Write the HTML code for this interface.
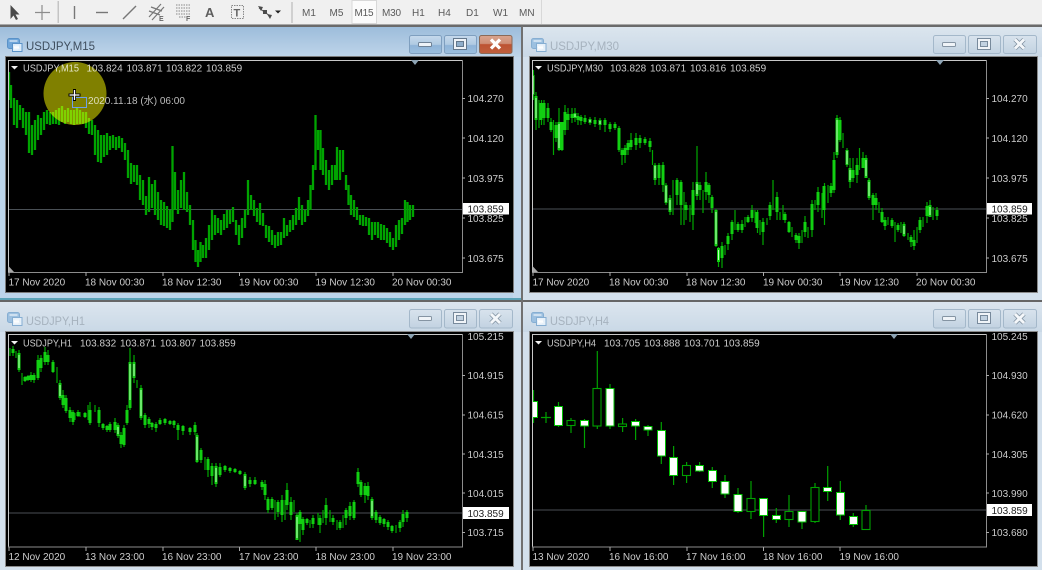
<!DOCTYPE html>
<html><head><meta charset="utf-8">
<style>
html,body{margin:0;padding:0;width:1042px;height:570px;overflow:hidden;background:#e8eef4}
svg{display:block;filter:blur(.3px)}
text{font-family:"Liberation Sans","Noto Sans CJK JP",sans-serif;font-size:10px;fill:#cccccc}
.t{fill:#5a5a5a;font-size:10px}
.ti{font-size:12px;fill:#a6b2be}
.w{stroke:#00a800;stroke-width:1.2;fill:none}
.b{stroke:#12d012;stroke-width:3;fill:none}
.c{stroke:#c0ffc0;stroke-width:1;fill:none}
</style></head><body>
<svg width="1042" height="570" viewBox="0 0 1042 570" xmlns="http://www.w3.org/2000/svg">
<defs>
<linearGradient id="ga" x1="0" y1="0" x2="0" y2="1"><stop offset="0" stop-color="#9dbddb"/><stop offset="1" stop-color="#bfd5ea"/></linearGradient>
<linearGradient id="gi" x1="0" y1="0" x2="0" y2="1"><stop offset="0" stop-color="#dbe5ee"/><stop offset="1" stop-color="#c9d8e6"/></linearGradient>
<linearGradient id="ba" x1="0" y1="0" x2="0" y2="1"><stop offset="0" stop-color="#c6d9ec"/><stop offset=".5" stop-color="#b0cae2"/><stop offset=".55" stop-color="#8fb4d8"/><stop offset="1" stop-color="#9cbfdf"/></linearGradient>
<linearGradient id="bi" x1="0" y1="0" x2="0" y2="1"><stop offset="0" stop-color="#d8e3ed"/><stop offset="1" stop-color="#c2d2e1"/></linearGradient>
<linearGradient id="br" x1="0" y1="0" x2="0" y2="1"><stop offset="0" stop-color="#d9a48e"/><stop offset=".45" stop-color="#cf8f76"/><stop offset=".5" stop-color="#bd5332"/><stop offset="1" stop-color="#c0603e"/></linearGradient>
<clipPath id="c1"><rect x="9" y="61" width="453" height="211"/></clipPath>
<clipPath id="c2"><rect x="533" y="61" width="453" height="211"/></clipPath>
<clipPath id="c3"><rect x="9" y="335" width="453" height="212"/></clipPath>
<clipPath id="c4"><rect x="533" y="335" width="453" height="212"/></clipPath>
</defs>

<!-- toolbar -->
<rect x="0" y="0" width="1042" height="25" fill="#f0f0f0"/>
<rect x="0" y="24" width="1042" height="1" fill="#a8a8a8"/>
<rect x="0" y="25" width="1042" height="2" fill="#6a6a6a"/>
<path d="M10.5 5V19L13.5 15.5 16 20 18 19 15.5 14.5H19.5Z" fill="#4a4a4a"/>
<path d="M42 5V20M35 12.5H50" stroke="#8c8c8c" stroke-width="1.2" fill="none"/>
<rect x="57.5" y="1" width="1.5" height="22" fill="#c4c4c4"/>
<path d="M74.5 6V19" stroke="#777" stroke-width="1.4"/>
<path d="M96 12.5H108" stroke="#777" stroke-width="1.4"/>
<path d="M123 19L136 6" stroke="#777" stroke-width="1.4"/>
<path d="M149 17L161 4M152 20L164 7M149 11L160 15M151 7L162 11" stroke="#777" stroke-width="1.2" fill="none"/>
<text x="159" y="21" style="font-size:7px;font-weight:bold;fill:#666">E</text>
<path d="M176 5H191M176 8H191M176 11H191M176 14H191M179 17H187" stroke="#888" stroke-dasharray="1.5 1" fill="none"/>
<text x="186" y="21" style="font-size:7px;font-weight:bold;fill:#666">F</text>
<text x="205" y="17" style="font-size:13px;font-weight:bold;fill:#5e5e5e">A</text>
<rect x="231.5" y="5.5" width="12" height="13" fill="none" stroke="#888" stroke-dasharray="1.5 1"/>
<text x="233.5" y="16.5" style="font-size:11px;font-weight:bold;fill:#666">T</text>
<path d="M259 8L270 16" stroke="#555"/><path d="M258 6L263 7 261 11ZM263 10h4v4h-4zM267 14l5 1-2 4z" fill="#4c4c4c"/>
<path d="M275 10.5h6l-3 3z" fill="#222"/>
<rect x="291" y="2" width="2" height="21" fill="#d0d0d0"/>
<rect x="352" y="0.5" width="24.5" height="23" fill="#fbfbfb" stroke="#d8d8d8"/>
<text class="t" x="302" y="16">M1</text>
<text class="t" x="329.5" y="16">M5</text>
<text class="t" x="354.5" y="16" textLength="19">M15</text>
<text class="t" x="382" y="16" textLength="19">M30</text>
<text class="t" x="412" y="16">H1</text>
<text class="t" x="438" y="16">H4</text>
<text class="t" x="466" y="16">D1</text>
<text class="t" x="493" y="16">W1</text>
<text class="t" x="519" y="16">MN</text>
<rect x="541" y="0" width="1" height="24" fill="#d8d8d8"/>

<!-- window frames -->
<rect x="0" y="27" width="521" height="272" fill="#bcd4ea"/>
<rect x="0" y="27" width="521" height="30" fill="url(#ga)"/>
<rect x="513" y="57" width="8" height="241" fill="#c3d8ec"/>
<rect x="0" y="298" width="521" height="2" fill="#5ba3b8"/>
<rect x="521" y="26" width="2" height="274" fill="#707070"/>
<rect x="523" y="27" width="519" height="273" fill="#d3e0ec"/>
<rect x="523" y="27" width="519" height="30" fill="url(#gi)"/>
<rect x="0" y="300" width="1042" height="2" fill="#666"/>
<rect x="0" y="302" width="521" height="268" fill="#d3e0ec"/>
<rect x="0" y="302" width="521" height="30" fill="url(#gi)"/>
<rect x="521" y="300" width="2" height="270" fill="#707070"/>
<rect x="523" y="302" width="519" height="268" fill="#d3e0ec"/>
<rect x="523" y="302" width="519" height="30" fill="url(#gi)"/>

<!-- black chart areas -->
<rect x="5.5" y="56.5" width="508" height="236" fill="#000" stroke="#7b7b7b"/>
<rect x="529.5" y="56.5" width="508" height="236" fill="#000" stroke="#8a8a8a"/>
<rect x="5.5" y="331.5" width="508" height="235" fill="#000" stroke="#8a8a8a"/>
<rect x="529.5" y="331.5" width="508" height="235" fill="#000" stroke="#8a8a8a"/>

<!-- title icons -->
<g><rect x="7.5" y="38.5" width="12" height="10" rx="2" fill="#6fa6da" stroke="#5a92c8"/><rect x="12.5" y="43.5" width="9.5" height="8" fill="#dcecfa" stroke="#5a92c8"/><path d="M9.5 41h8M14 46l1 3 1-3 1 3 1-3 1 3" stroke="#fff" fill="none" stroke-width=".9"/></g>
<g><rect x="531.5" y="38.5" width="12" height="10" rx="2" fill="#9cc0e0" stroke="#86aed2"/><rect x="536.5" y="43.5" width="9.5" height="8" fill="#e6f0f9" stroke="#86aed2"/><path d="M533.5 41h8M538 46l1 3 1-3 1 3 1-3 1 3" stroke="#fff" fill="none" stroke-width=".9"/></g>
<g><rect x="7.5" y="312.5" width="12" height="10" rx="2" fill="#9cc0e0" stroke="#86aed2"/><rect x="12.5" y="317.5" width="9.5" height="8" fill="#e6f0f9" stroke="#86aed2"/><path d="M9.5 315h8M14 320l1 3 1-3 1 3 1-3 1 3" stroke="#fff" fill="none" stroke-width=".9"/></g>
<g><rect x="531.5" y="312.5" width="12" height="10" rx="2" fill="#9cc0e0" stroke="#86aed2"/><rect x="536.5" y="317.5" width="9.5" height="8" fill="#e6f0f9" stroke="#86aed2"/><path d="M533.5 315h8M538 320l1 3 1-3 1 3 1-3 1 3" stroke="#fff" fill="none" stroke-width=".9"/></g>

<text class="ti" x="26" y="50" textLength="69" lengthAdjust="spacingAndGlyphs" style="fill:#3f4e5e">USDJPY,M15</text>
<text class="ti" x="550" y="50" textLength="69" lengthAdjust="spacingAndGlyphs">USDJPY,M30</text>
<text class="ti" x="26" y="325" textLength="59" lengthAdjust="spacingAndGlyphs">USDJPY,H1</text>
<text class="ti" x="550" y="325" textLength="59" lengthAdjust="spacingAndGlyphs">USDJPY,H4</text>

<!-- window buttons W1 -->
<rect x="409.5" y="35.5" width="32" height="18" rx="2" fill="url(#ba)" stroke="#7f9fbf"/>
<rect x="418.5" y="42.5" width="13" height="4" rx="1" fill="#eef3f8" stroke="#6f8296"/>
<rect x="444.5" y="35.5" width="32" height="18" rx="2" fill="url(#ba)" stroke="#7f9fbf"/>
<rect x="453.5" y="38.5" width="13" height="11" fill="#eef3f8" stroke="#64788c"/><rect x="456.5" y="41.5" width="7" height="5" fill="#8faecb" stroke="#64788c"/>
<rect x="479.5" y="35.5" width="32.5" height="18" rx="2" fill="url(#br)" stroke="#8a6a58"/>
<path d="M491 39.5l9 9M500 39.5l-9 9" stroke="#fff" stroke-width="3.2"/>
<!-- W2 -->
<rect x="933.5" y="35.5" width="32" height="18" rx="2" fill="url(#bi)" stroke="#a4b8ca"/>
<rect x="942.5" y="42.5" width="13" height="4" rx="1" fill="#f0f4f8" stroke="#8594a3"/>
<rect x="968.5" y="35.5" width="32" height="18" rx="2" fill="url(#bi)" stroke="#a4b8ca"/>
<rect x="977.5" y="38.5" width="13" height="11" fill="#f0f4f8" stroke="#788a9c"/><rect x="980.5" y="41.5" width="7" height="5" fill="#c2d2e1" stroke="#788a9c"/>
<rect x="1003.5" y="35.5" width="33" height="18" rx="2" fill="url(#bi)" stroke="#a4b8ca"/>
<path d="M1015 39.5l9 9M1024 39.5l-9 9" stroke="#7c8c9c" stroke-width="4.4"/><path d="M1015 39.5l9 9M1024 39.5l-9 9" stroke="#f4f7fa" stroke-width="3"/>
<!-- W3 -->
<rect x="409.5" y="309.5" width="32" height="18.5" rx="2" fill="url(#bi)" stroke="#a4b8ca"/>
<rect x="418.5" y="316.5" width="13" height="4" rx="1" fill="#f0f4f8" stroke="#8594a3"/>
<rect x="444.5" y="309.5" width="32" height="18.5" rx="2" fill="url(#bi)" stroke="#a4b8ca"/>
<rect x="453.5" y="312.5" width="13" height="11" fill="#f0f4f8" stroke="#788a9c"/><rect x="456.5" y="315.5" width="7" height="5" fill="#c2d2e1" stroke="#788a9c"/>
<rect x="479.5" y="309.5" width="33" height="18.5" rx="2" fill="url(#bi)" stroke="#a4b8ca"/>
<path d="M491 314l9 9M500 314l-9 9" stroke="#7c8c9c" stroke-width="4.4"/><path d="M491 314l9 9M500 314l-9 9" stroke="#f4f7fa" stroke-width="3"/>
<!-- W4 -->
<rect x="933.5" y="309.5" width="32" height="18.5" rx="2" fill="url(#bi)" stroke="#a4b8ca"/>
<rect x="942.5" y="316.5" width="13" height="4" rx="1" fill="#f0f4f8" stroke="#8594a3"/>
<rect x="968.5" y="309.5" width="32" height="18.5" rx="2" fill="url(#bi)" stroke="#a4b8ca"/>
<rect x="977.5" y="312.5" width="13" height="11" fill="#f0f4f8" stroke="#788a9c"/><rect x="980.5" y="315.5" width="7" height="5" fill="#c2d2e1" stroke="#788a9c"/>
<rect x="1003.5" y="309.5" width="33" height="18.5" rx="2" fill="url(#bi)" stroke="#a4b8ca"/>
<path d="M1015 314l9 9M1024 314l-9 9" stroke="#7c8c9c" stroke-width="4.4"/><path d="M1015 314l9 9M1024 314l-9 9" stroke="#f4f7fa" stroke-width="3"/>

<!-- price lines -->
<path d="M9 209.5H462M533 209H986" stroke="#4a5056" stroke-width="1"/>
<path d="M9 513H462M533 510H986" stroke="#4a4e54" stroke-width="1"/>

<!-- W1 bars -->
<path clip-path="url(#c1)" fill="none" stroke="#00a400" stroke-width="2.3" d="M9 72V100M11 85V108M14 98V125M17 100V128M20 105V120M23 108V128M26 112V135M29 112V153M32 125V155M35 120V150M38 115V140M41 118V135M44 112V130M47 110V124M50 112V125M53 112V124M56 110V124M59 108V125M62 106V122M65 110V124M68 108V122M71 110V124M74 110V125M77 108V124M80 110V124M83 112V124M86 112V128M89 118V134M92 120V135M95 125V155M98 130V162M101 135V163M104 135V157M107 133V155M110 136V150M113 135V148M116 137V150M119 136V148M122 138V152M125 143V160M128 150V178M131 163V184M134 165V182M137 165V185M140 175V200M143 180V205M146 196V215M149 177V212M152 184V208M155 180V215M158 192V220M161 200V225M164 202V226M167 206V228M170 210V230M172.5 146V222M175 172V210M178 190V214M181 180V208M184 172V210M187 192V212M190 205V225M193 220V250M195.5 240V262M198 250V267M200.5 242V262M203 245V258M206 238V258M209 225V250M212 210V240M215 215V235M218 218V233M221 220V235M224 214V230M227 210V228M230 210V224M233 207V222M236 220V235M239 225V245M242 218V238M245 210V228M248 180V215M251 195V210M254 200V216M257 208V222M260 203V225M263 213V226M266 225V238M269 226V242M272 230V245M275 235V248M278 232V246M281 232V245M284 218V238M287 225V236M290 220V232M293 215V230M296 208V225M299 197V220M302 205V225M305 210V222M308 200V216M310.5 185V210M313 165V190M315.5 115V170M318 130V150M320.5 130V170M323 148V175M326 160V185M329 170V190M332 165V185M335 165V180M337 147V180M340 150V180M343 150V172M346 175V190M348.5 185V205M351 195V215M354 200V217M357 207V220M360 215V225M363 215V226M366 217V226M369 218V235M372 222V240M375 222V235M378 222V238M381 224V240M384 225V240M387 228V243M390 232V247M393 238V250M396 225V247M399 220V240M402 218V234M405 200V225M407.5 202V222M410 205V220M413 205V217"/>

<!-- W2 candles -->
<g clip-path="url(#c2)">
<path class="w" d="M533.5 70V100M536 92V130M539 100V128M541.5 100V125M544 100V125M548 103V122M551 118V132M553.5 120V155M556 122V142M559 108V151M562 122V151M565 105V135M568 108V130M572 108V123M575 108V122M578 113V125M581 115V125M585 115V124M590 117V125M595 117V127M600 118V130M605 118V132M610 122V132M615 122V130M619 126V152M622 148V165M625 145V163M628 140V155M631 133V150M636 133V150M640 135V148M645 137V145M650 138V152M652.5 150V165M655 163V185M659 163V185M663 162V192M666 183V205M670 195V215M673 180V215M677 178V205M681 180V225M684 192V225M686 202V220M690 205V222M693 182V230M697 146V200M700 182V200M703 190V213M706 172V200M709 183V203M712 195V213M716 209V247M718.5 247V267M722 242V268M725 245V255M728 233V250M732 220V240M735 210V230M738 222V232M742 220V233M745 217V227M748 215V223M752 205V222M755 210V223M757.5 210V233M760 220V235M763 218V245M767 218V225M770 202V220M773 180V210M777 192V220M780 212V220M783 205V220M785 212V223M789 221V233M792 227V237M796 233V243M799 233V249M802 230V243M805 216V237M808 227V238M812 200V237M815 200V210M818 187V212M822 193V218M824.5 183V225M828 185V203M831 183V197M834 152V193M837 115V158M840 117V142M843 133V148M847 148V167M850 158V188M853 158V182M857 158V183M859.5 148V170M863 152V168M866 155V178M869 178V200M873 193V220M876 193V210M879 202V213M882 208V223M885 217V230M888 217V225M892 218V228M895 222V242M898 223V232M901 222V233M904 222V237M908 233V240M911 235V247M914 230V250M917 227V243M920 217V233M923 217V227M927 202V223M930 200V217M933 207V220M937 207V220"/>
<path class="b" d="M533 75V95M536 96V120M541 103V120M544 103V118M548 108V118M551 122V130M556 125V138M559 122V150M562 122V150M565 112V130M568 114V120M572 114V118M575 113V118M578 116V120M581 117V121M585 118V122M590 119V123M595 120V124M600 120V125M605 120V125M610 124V129M615 124V128M619 128V150M622 150V155M625 148V155M628 143V150M631 140V147M636 138V145M640 138V143M645 139V143M650 141V147M655 165V180M659 165V178M663 165V185M666 185V203M670 198V212M677 180V195M681 182V205M686 205V210M693 190V215M697 182V196M700 185V190M706 182V192M709 185V195M712 197V208M716 210V246M718.5 248V262M722 246V258M728 236V244M732 222V234M738 224V230M742 224V230M748 217V222M752 210V218M757 212V228M763 222V232M770 205V216M777 197V212M785 214V220M789 222V232M796 235V240M799 236V243M805 222V232M812 204V230M818 192V205M824 186V210M831 186V193M834 160V190M837 118V155M840 120V140M847 150V165M850 168V182M853 170V178M857 165V175M863 158V168M866 158V178M869 180V198M873 195V205M876 198V205M882 212V222M885 220V226M892 220V226M898 225V230M904 224V236M911 237V242M914 240V246M920 220V230M927 206V216M930 205V217M937 210V216"/>
<path class="c" d="M533 76V94M536 98V118M559 124V148M655 166V178M666 186V202M670 200V210M697 184V194M716 212V244M718.5 250V260M837 120V152M847 151V164M850 170V180M866 160V176M869 182V196M930 207V215M904 226V234M575 114V117M590 120V122M600 121V124"/>
</g>

<!-- W3 candles -->
<g clip-path="url(#c3)">
<path class="w" d="M10 348V356M13 346V356M16 351V358M19 350V372M22 373V385M25 376V382M28 375V381M31 372V382M34 373V383M38 355V380M41 355V372M45 347V365M48 350V365M53 360V373M57 367V383M60 380V400M63 390V408M66 395V413M70 407V422M73 410V425M75 413V420M78 410V417M80 412V417M85 412V418M88 405V420M90 402V425M95 405V412M99 407V427M103 423V430M107 425V432M110 422V432M115 418V433M118 423V438M121 432V448M124 425V447M127 405V425M130 348V410M134 355V383M137 380V388M141 385V420M145 413V428M149 417V428M152 422V430M156 422V432M160 418V425M165 418V425M170 420V425M174 420V428M178 423V440M183 425V435M190 427V435M195 422V435M197 433V463M201 448V463M205 457V470M208 457V477M212 463V485M216 463V487M220 463V477M225 465V472M230 467V473M235 468V473M240 470V475M245 472V490M250 477V487M255 477V485M262 480V490M265 480V500M268 497V513M272 497V510M275 500V520M278 500V517M282 495V522M285 500V520M287 483V510M291 497V520M294 500V512M297 513V540M300 510V542M303 517V535M307 518V525M310 520V528M313 515V528M318 513V525M320 515V533M323 510V523M326 498V525M330 510V522M333 515V525M337 520V530M340 520V530M343 515V528M346 508V525M350 502V520M354 500V520M358 468V487M361 480V497M365 483V503M368 482V500M372 497V520M376 510V523M380 515V525M384 518V527M388 520V530M392 525V533M396 525V533M400 520V532M403 510V527M407 510V522"/>
<path class="b" d="M13 349V353M19 353V370M25 377V381M28 376V380M31 375V380M34 375V380M38 360V378M41 358V368M45 352V362M48 355V362M53 362V372M60 383V398M63 395V405M66 398V411M70 410V418M73 412V422M78 412V416M85 413V417M90 410V423M99 410V423M103 424V428M107 426V430M110 424V430M115 422V430M118 425V436M121 435V444M124 428V445M127 410V423M130 362V408M134 362V378M141 388V418M145 415V425M149 419V424M152 423V427M156 424V428M160 420V424M165 419V423M170 421V424M174 421V425M178 425V430M183 426V431M190 428V432M195 425V432M197 435V462M201 450V460M208 459V470M212 466V476M216 466V484M220 467V475M225 466V470M230 468V471M235 469V472M240 471V474M245 474V488M250 480V484M255 480V484M262 482V487M265 484V495M268 499V510M272 499V508M278 502V512M282 500V515M287 490V505M291 502V515M297 515V540M300 512V524M303 519V530M307 519V523M313 518V524M320 518V525M326 505V518M333 518V522M340 522V528M346 510V518M350 506V516M354 502V518M358 472V484M361 482V495M365 486V495M368 486V496M372 499V518M376 512V520M380 517V523M384 519V524M388 522V527M392 526V531M400 522V528M403 514V522M407 512V518"/>
<path class="c" d="M19 355V368M60 385V396M118 427V434M130 364V400M134 364V376M141 390V416M197 437V460M216 468V482M245 476V486M297 517V538M372 501V516"/>
</g>

<!-- W4 candles -->
<g clip-path="url(#c4)">
<path stroke="#00a000" stroke-width="1.2" fill="none" d="M533.5 390V423M546 412V423M541 417.5H551M558.5 402V427M571 418V433M584.5 419V448M597.3 351V429M610 384V429M622.6 418V432M635.6 419V440M648 425V436M661.3 422V464M673.6 446V485M686.6 462V483M699.6 462V472M712.3 467V488M725 475V498M738 488V513M751 481V519M763.6 498V537M776.3 508V523M789 495V527M802 511V529M815 483V523M827.7 466V501M840.3 481V520M853.3 513V527M866 505V529"/>
<g fill="#fff" stroke="#00c000" stroke-width="1">
<rect x="529" y="401.5" width="8.5" height="16"/>
<rect x="554.5" y="406.5" width="8" height="19"/>
<rect x="580.5" y="420.5" width="8" height="5.5"/>
<rect x="606" y="388.5" width="8" height="37.5"/>
<rect x="631.5" y="421.5" width="8" height="4.5"/>
<rect x="644" y="426.5" width="8" height="3.5"/>
<rect x="657.5" y="430.5" width="8" height="25.5"/>
<rect x="669.5" y="457.5" width="8" height="18"/>
<rect x="695.5" y="465.5" width="8" height="5.5"/>
<rect x="708.5" y="470.5" width="8" height="11"/>
<rect x="721" y="481.5" width="8" height="12.5"/>
<rect x="734" y="494.5" width="8" height="17"/>
<rect x="759.5" y="498.5" width="8" height="17"/>
<rect x="772.5" y="515.5" width="8" height="4"/>
<rect x="798" y="511.5" width="8" height="10.5"/>
<rect x="823.5" y="487.5" width="8" height="4"/>
<rect x="836.5" y="492.5" width="8" height="22.5"/>
<rect x="849.5" y="516.5" width="8" height="8"/>
</g>
<g fill="#000" stroke="#00a000" stroke-width="1.1">
<rect x="567" y="420.5" width="8" height="5"/>
<rect x="593" y="388.5" width="8" height="37.5"/>
<rect x="618.5" y="424" width="8" height="2.5"/>
<rect x="682.5" y="465.5" width="8" height="10"/>
<rect x="747" y="498.5" width="8" height="13"/>
<rect x="785" y="511.5" width="8" height="8"/>
<rect x="811" y="487.5" width="8" height="34"/>
<rect x="862" y="510.5" width="8" height="19"/>
</g>
</g>

<!-- frames -->
<g fill="none" stroke-width="1">
<path d="M8.5 273V60.5H462.5" stroke="#c8c8c8"/><path d="M462.5 60V272.5H8" stroke="#8c8c8c"/>
<path d="M532.5 273V60.5H986.5" stroke="#c8c8c8"/><path d="M986.5 60V272.5H532" stroke="#8c8c8c"/>
<path d="M8.5 547V334.5H462.5" stroke="#c8c8c8"/><path d="M462.5 334V547H8" stroke="#8c8c8c"/>
<path d="M532.5 547V334.5H986.5" stroke="#c8c8c8"/><path d="M986.5 334V547H532" stroke="#8c8c8c"/>
</g>
<path d="M8.5 272V266L14 272ZM532.5 272V266L538 272Z" fill="#a8a8a8"/>
<path d="M411 60h8l-4 5zM936 60h8l-4 5zM407 334h8l-4 5zM890 334h8l-4 5z" fill="#8ea4b4"/>
<path d="M9 272v4M86 272v4M163 272v4M239.5 272v4M316 272v4M393 272v4M533 272v4M610 272v4M687 272v4M763.5 272v4M840 272v4M917 272v4M9 547v4M86 547v4M163 547v4M239.5 547v4M316 547v4M393 547v4M533 547v4M610 547v4M687 547v4M763.5 547v4M840 547v4" stroke="#aaa" fill="none"/>
<path d="M462 98.5h3M462 138h3M462 178h3M462 218h3M462 258h3M986 98.5h3M986 138h3M986 178h3M986 218h3M986 258h3M462 375.5h3M462 415h3M462 454h3M462 493h3M462 532.5h3M986 375.5h3M986 415h3M986 454h3M986 493h3M986 532.5h3" stroke="#aaa" fill="none"/>

<!-- header triangles -->
<path d="M11 66h7l-3.5 3.5zM535 66h7l-3.5 3.5zM11 341h7l-3.5 3.5zM535 341h7l-3.5 3.5z" fill="#f0f0f0"/>

<!-- header texts -->
<text x="23" y="71.5" textLength="56" lengthAdjust="spacingAndGlyphs">USDJPY,M15</text>
<text x="86.5" y="71.5">103.824</text><text x="126.5" y="71.5">103.871</text><text x="166" y="71.5">103.822</text><text x="206" y="71.5">103.859</text>
<text x="547" y="71.5" textLength="56" lengthAdjust="spacingAndGlyphs">USDJPY,M30</text>
<text x="610" y="71.5">103.828</text><text x="650" y="71.5">103.871</text><text x="690" y="71.5">103.816</text><text x="730" y="71.5">103.859</text>
<text x="23" y="346.5" textLength="49" lengthAdjust="spacingAndGlyphs">USDJPY,H1</text>
<text x="80" y="346.5">103.832</text><text x="120" y="346.5">103.871</text><text x="160" y="346.5">103.807</text><text x="199.5" y="346.5">103.859</text>
<text x="547" y="346.5" textLength="49" lengthAdjust="spacingAndGlyphs">USDJPY,H4</text>
<text x="604" y="346.5">103.705</text><text x="644" y="346.5">103.888</text><text x="684" y="346.5">103.701</text><text x="723.5" y="346.5">103.859</text>

<!-- price labels -->
<text x="467.5" y="102">104.270</text><text x="467.5" y="142">104.120</text><text x="467.5" y="182">103.975</text><text x="467.5" y="222">103.825</text><text x="467.5" y="262">103.675</text>
<text x="991.5" y="102">104.270</text><text x="991.5" y="142">104.120</text><text x="991.5" y="182">103.975</text><text x="991.5" y="222">103.825</text><text x="991.5" y="262">103.675</text>
<text x="467.5" y="340">105.215</text><text x="467.5" y="379">104.915</text><text x="467.5" y="418.5">104.615</text><text x="467.5" y="458">104.315</text><text x="467.5" y="497">104.015</text><text x="467.5" y="536">103.715</text>
<text x="991.5" y="340">105.245</text><text x="991.5" y="379">104.930</text><text x="991.5" y="418.5">104.620</text><text x="991.5" y="458">104.305</text><text x="991.5" y="497">103.990</text><text x="991.5" y="536">103.680</text>

<rect x="463" y="203" width="46" height="11.5" fill="#fff"/><text x="467.5" y="212.5" style="fill:#222">103.859</text>
<rect x="987" y="203" width="45" height="11.5" fill="#fff"/><text x="991.5" y="212.5" style="fill:#222">103.859</text>
<rect x="463" y="507" width="46" height="12" fill="#fff"/><text x="467.5" y="517" style="fill:#222">103.859</text>
<rect x="987" y="504" width="45" height="12" fill="#fff"/><text x="991.5" y="514" style="fill:#222">103.859</text>

<!-- time labels -->
<text x="8.5" y="285.5">17 Nov 2020</text><text x="85" y="285.5">18 Nov 00:30</text><text x="162" y="285.5">18 Nov 12:30</text><text x="239" y="285.5">19 Nov 00:30</text><text x="315.5" y="285.5">19 Nov 12:30</text><text x="392" y="285.5">20 Nov 00:30</text>
<text x="532.5" y="285.5">17 Nov 2020</text><text x="609" y="285.5">18 Nov 00:30</text><text x="686" y="285.5">18 Nov 12:30</text><text x="763" y="285.5">19 Nov 00:30</text><text x="839.5" y="285.5">19 Nov 12:30</text><text x="916" y="285.5">20 Nov 00:30</text>
<text x="8.5" y="560">12 Nov 2020</text><text x="85" y="560">13 Nov 23:00</text><text x="162" y="560">16 Nov 23:00</text><text x="239" y="560">17 Nov 23:00</text><text x="315.5" y="560">18 Nov 23:00</text><text x="392" y="560">19 Nov 23:00</text>
<text x="532.5" y="560">13 Nov 2020</text><text x="609" y="560">16 Nov 16:00</text><text x="686" y="560">17 Nov 16:00</text><text x="763" y="560">18 Nov 16:00</text><text x="839.5" y="560">19 Nov 16:00</text>

<!-- crosshair tool overlay -->
<text x="88" y="104" textLength="97" lengthAdjust="spacingAndGlyphs" style="fill:#bdbdbd">2020.11.18 (水) 06:00</text>
<circle cx="75" cy="93.5" r="31.5" fill="#808000" style="mix-blend-mode:screen"/>
<rect x="72.5" y="97.5" width="14" height="10" fill="none" stroke="#6f9fe8"/>
<path d="M74.5 89V101M68.5 95H80.5" stroke="#000" stroke-width="3"/>
<path d="M74.5 90V100M69.5 95H79.5" stroke="#fff" stroke-width="1.3"/>
</svg>
</body></html>
